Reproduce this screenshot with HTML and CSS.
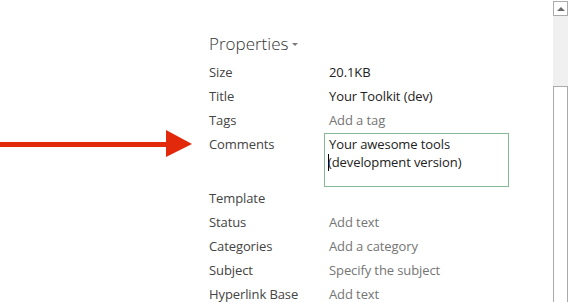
FILE: index.html
```html
<!DOCTYPE html>
<html lang="en">
<head>
   <meta charset="UTF-8">
   <title>Properties</title>
   <link rel="stylesheet" href="styles.css">
</head>
<body>
   <div class="page">
      <div class="content">
         <svg class="callout" width="195" height="32" viewBox="0 0 195 32">
            <rect x="0" y="14" width="168" height="5" fill="#e2290b"/>
            <polygon points="166,2 192,16 166,29" fill="#e2290b"/>
         </svg>

         <div class="props">
            <div class="props-title">Properties <span class="caret"></span></div>

            <div class="props-grid">
               <div class="label">Size</div>
               <div class="value">20.1KB</div>

               <div class="label">Title</div>
               <div class="value">Your Toolkit (dev)</div>

               <div class="label">Tags</div>
               <div class="value hint">Add a tag</div>

               <div class="label comments-label">Comments</div>
               <div class="value comments">
                  <div class="textbox">Your awesome tools<br><span class="cursor"></span>(development version)</div>
               </div>

               <div class="label">Template</div>
               <div class="value"></div>

               <div class="label">Status</div>
               <div class="value hint">Add text</div>

               <div class="label">Categories</div>
               <div class="value hint">Add a category</div>

               <div class="label">Subject</div>
               <div class="value hint">Specify the subject</div>

               <div class="label">Hyperlink Base</div>
               <div class="value hint">Add text</div>
            </div>
         </div>
      </div>

      <div class="scrollbar">
         <div class="scroll-up"><span class="up-arrow"></span></div>
         <div class="scroll-track"></div>
         <div class="scroll-thumb"></div>
      </div>
   </div>
</body>
</html>
```

FILE: styles.css
```css
html, body {
   margin: 0;
   height: 100%;
   background: #fff;
}

body {
   font-family: "Open Sans", "Noto Sans", sans-serif;
   font-size: 13px;
   color: #444;
   overflow: hidden;
}

.page {
   display: flex;
   height: 302px;
}

.content {
   flex: 1;
   position: relative;
}

/* red annotation arrow pointing at Comments */
.callout {
   position: absolute;
   left: 0;
   top: 128px;
}

.props {
   padding: 28px 0 0 209px;
}

.props-title {
   height: 32px;
   line-height: 32px;
   font-size: 17px;
   font-weight: 300;
   color: #333;
   display: flex;
   align-items: center;
   gap: 4px;
}

.caret {
   width: 0;
   height: 0;
   border-left: 3px solid transparent;
   border-right: 3px solid transparent;
   border-top: 3px solid #7a7a7a;
   margin-top: 1px;
}

.props-grid {
   display: grid;
   grid-template-columns: 120px 180px;
   grid-template-rows: repeat(3, 24px) 54px repeat(5, 24px);
   align-items: center;
   letter-spacing: -0.1px;
}

.label {
   color: #444;
   white-space: nowrap;
}

.value {
   color: #222;
   white-space: nowrap;
}

.value.hint {
   color: #757575;
}

.props-grid .comments-label,
.props-grid .comments {
   align-self: start;
}

.comments-label {
   line-height: 24px;
}

.textbox {
   margin: 1px 0 0 -5px;
   height: 51px;
   border: 1px solid #86b99a;
   padding: 1px 4px 0;
   line-height: 18px;
   color: #222;
}

.cursor {
   display: inline-block;
   width: 1px;
   height: 17px;
   margin-right: -1px;
   margin-left: -1px;
   background: #000;
   vertical-align: -4px;
}

.scrollbar {
   width: 15px;
   margin: 1px 1px 0 0;
   display: flex;
   flex-direction: column;
}

.scroll-up {
   height: 13px;
   border: 1px solid #ababab;
   display: flex;
   justify-content: center;
   align-items: center;
}

.up-arrow {
   width: 0;
   height: 0;
   border-left: 4px solid transparent;
   border-right: 4px solid transparent;
   border-bottom: 4px solid #6d6d6d;
}

.scroll-track {
   height: 70px;
   background: #f0f0f0;
}

.scroll-thumb {
   flex: 1;
   border: 1px solid #ababab;
   border-bottom: none;
}
```
